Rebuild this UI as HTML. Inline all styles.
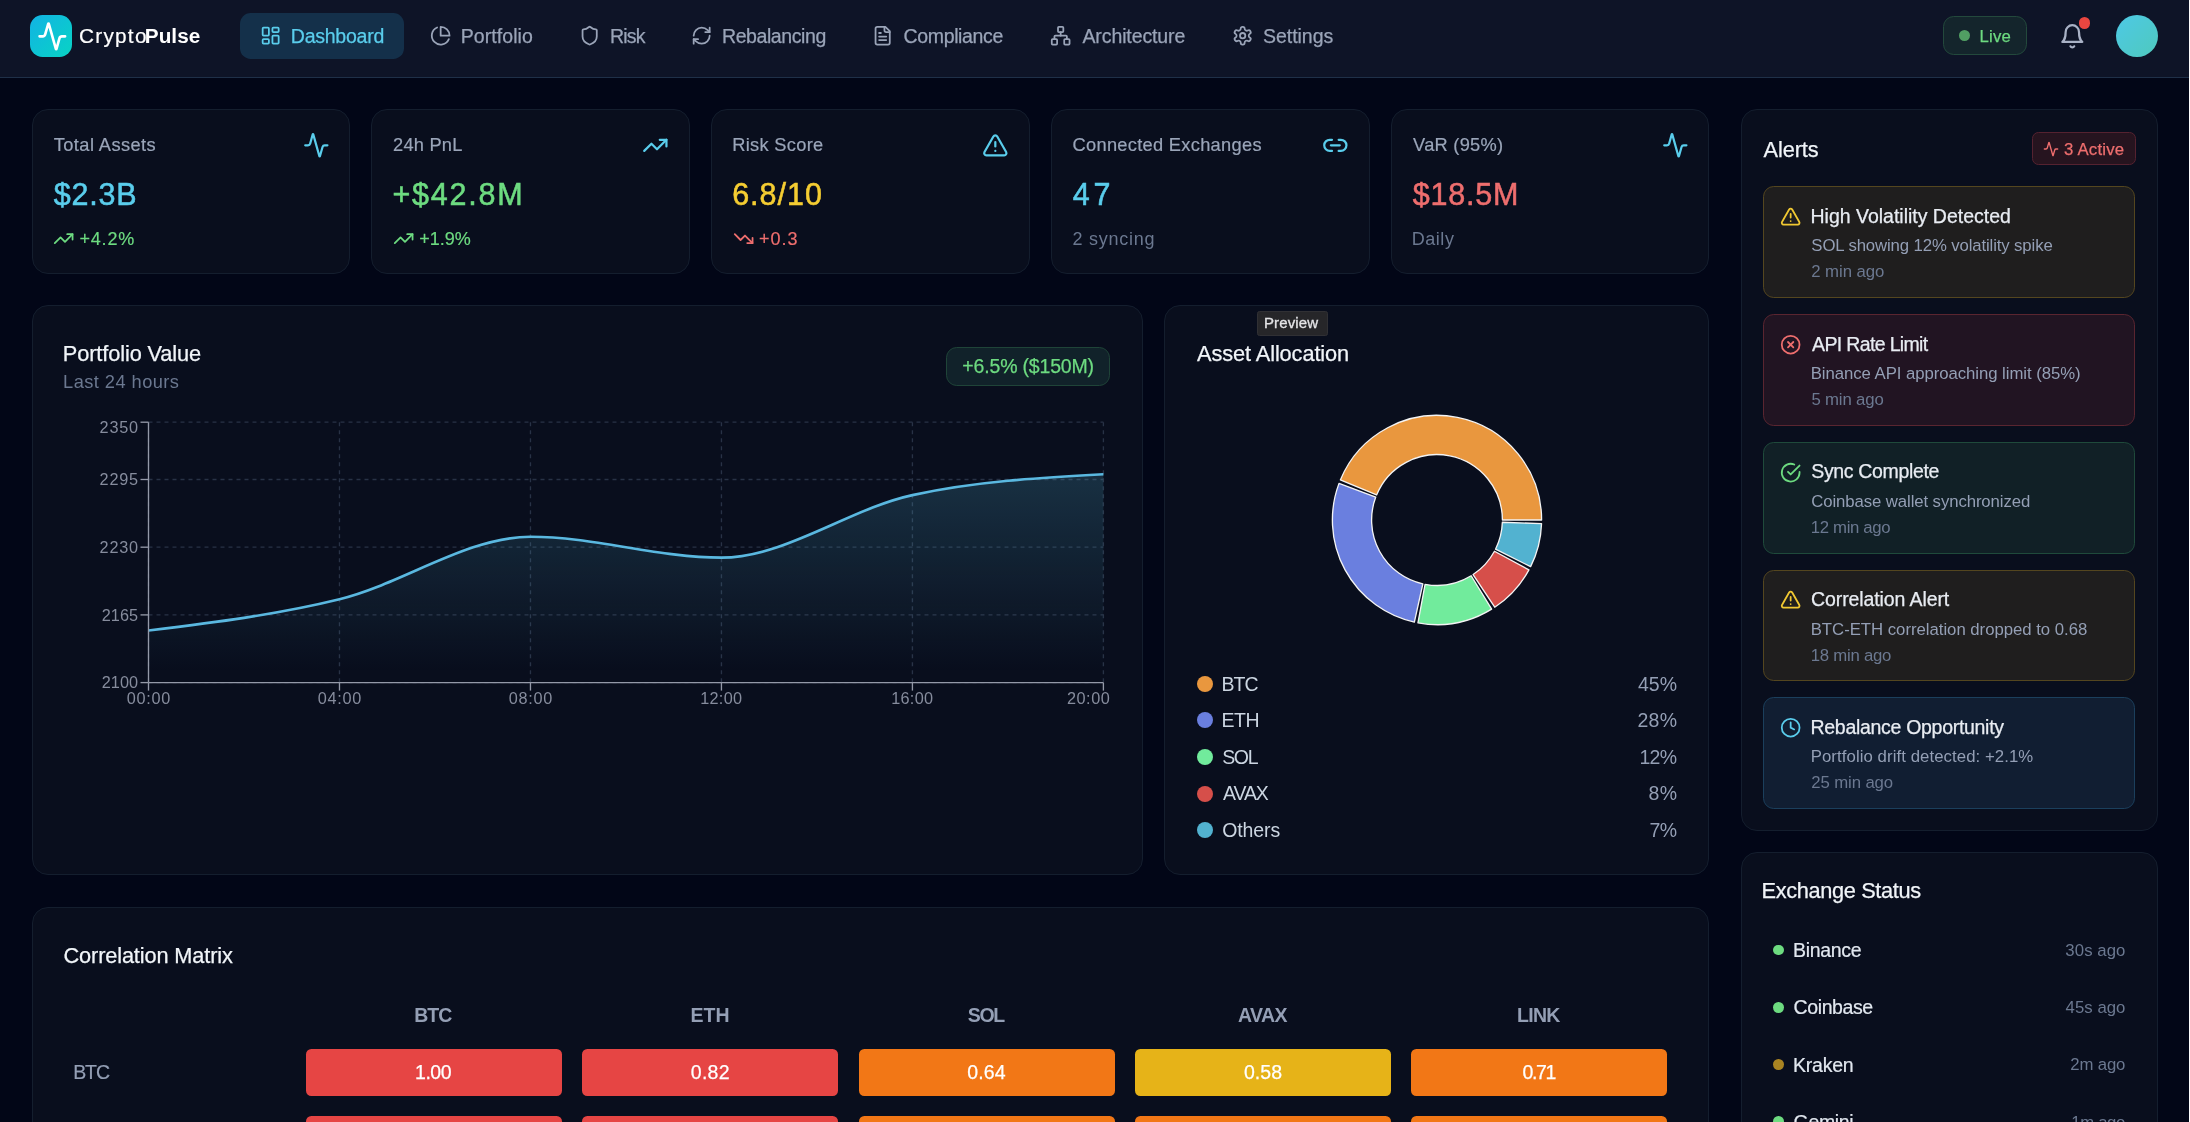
<!DOCTYPE html>
<html><head><meta charset="utf-8"><title>CryptoPulse</title>
<style>
html,body{margin:0;padding:0;background:#020617;}
body{width:2190px;height:1122px;overflow:hidden;position:relative;font-family:"Liberation Sans",sans-serif;}
.t{position:absolute;white-space:nowrap;line-height:1;}
.b{position:absolute;box-sizing:border-box;}
.i{position:absolute;overflow:visible;}
svg.c{position:absolute;overflow:visible;}
#w{position:absolute;left:0;top:0;width:2190px;height:1122px;will-change:transform;}
</style></head><body><div id="w">
<div class="b" style="left:0.00px;top:0.00px;width:2190.00px;height:77.30px;background:#0e1427;"></div>
<div class="b" style="left:0.00px;top:77.00px;width:2190.00px;height:1.40px;background:#1f3048;"></div>
<div class="b" style="left:30.00px;top:15.00px;width:42.00px;height:42.00px;background:linear-gradient(135deg,#12b3e4 0%,#08d4c4 100%);border-radius:12.5px;"></div>
<svg class="i" style="left:36.50px;top:21.10px" width="30.70" height="30.70" viewBox="0 0 24 24" fill="none" stroke="#ffffff" stroke-width="2.05" stroke-linecap="round" stroke-linejoin="round"><path d="M22 12h-2.48a2 2 0 0 0-1.93 1.46l-2.35 8.36a.25.25 0 0 1-.48 0L9.24 2.18a.25.25 0 0 0-.48 0l-2.35 8.36A2 2 0 0 1 4.49 12H2"/></svg>
<div class="t" style="left:78.95px;top:26.00px;font-size:20.75px;color:#ffffff;letter-spacing:1.280px;-webkit-text-stroke:0.2px #ffffff;">Crypto</div>
<div class="t" style="left:144.81px;top:26.00px;font-size:20.75px;color:#ffffff;letter-spacing:0.031px;font-weight:700;">Pulse</div>
<div class="b" style="left:240.00px;top:12.60px;width:164.40px;height:46.40px;background:#14304a;border-radius:10.7px;"></div>
<svg class="i" style="left:260.20px;top:25.30px" width="21.33" height="21.33" viewBox="0 0 24 24" fill="none" stroke="#5acdec" stroke-width="2" stroke-linecap="round" stroke-linejoin="round"><rect width="7" height="9" x="3" y="3" rx="1"/><rect width="7" height="5" x="14" y="3" rx="1"/><rect width="7" height="9" x="14" y="12" rx="1"/><rect width="7" height="5" x="3" y="16" rx="1"/></svg>
<div class="t" style="left:290.80px;top:27.00px;font-size:19.50px;color:#5acdec;letter-spacing:-0.244px;-webkit-text-stroke:0.25px #5acdec;">Dashboard</div>
<svg class="i" style="left:429.80px;top:25.30px" width="21.33" height="21.33" viewBox="0 0 24 24" fill="none" stroke="#9aa4b8" stroke-width="2" stroke-linecap="round" stroke-linejoin="round"><path d="M21.21 15.89A10 10 0 1 1 8 2.83"/><path d="M22 12A10 10 0 0 0 12 2v10z"/></svg>
<div class="t" style="left:460.80px;top:27.00px;font-size:19.50px;color:#9aa4b8;letter-spacing:0.059px;-webkit-text-stroke:0.25px #9aa4b8;">Portfolio</div>
<svg class="i" style="left:579.20px;top:25.30px" width="21.33" height="21.33" viewBox="0 0 24 24" fill="none" stroke="#9aa4b8" stroke-width="2" stroke-linecap="round" stroke-linejoin="round"><path d="M20 13c0 5-3.5 7.5-7.66 8.95a1 1 0 0 1-.67-.01C7.5 20.5 4 18 4 13V6a1 1 0 0 1 1-1c2 0 4.5-1.2 6.24-2.72a1.17 1.17 0 0 1 1.52 0C14.51 3.81 17 5 19 5a1 1 0 0 1 1 1z"/></svg>
<div class="t" style="left:610.00px;top:27.00px;font-size:19.50px;color:#9aa4b8;letter-spacing:-0.784px;-webkit-text-stroke:0.25px #9aa4b8;">Risk</div>
<svg class="i" style="left:690.70px;top:25.30px" width="21.33" height="21.33" viewBox="0 0 24 24" fill="none" stroke="#9aa4b8" stroke-width="2" stroke-linecap="round" stroke-linejoin="round"><path d="M3 12a9 9 0 0 1 9-9 9.75 9.75 0 0 1 6.74 2.74L21 8"/><path d="M21 3v5h-5"/><path d="M21 12a9 9 0 0 1-9 9 9.75 9.75 0 0 1-6.74-2.74L3 16"/><path d="M8 16H3v5"/></svg>
<div class="t" style="left:722.00px;top:27.00px;font-size:19.50px;color:#9aa4b8;letter-spacing:-0.417px;-webkit-text-stroke:0.25px #9aa4b8;">Rebalancing</div>
<svg class="i" style="left:871.80px;top:25.30px" width="21.33" height="21.33" viewBox="0 0 24 24" fill="none" stroke="#9aa4b8" stroke-width="2" stroke-linecap="round" stroke-linejoin="round"><path d="M15 2H6a2 2 0 0 0-2 2v16a2 2 0 0 0 2 2h12a2 2 0 0 0 2-2V7Z"/><path d="M14 2v4a2 2 0 0 0 2 2h4"/><path d="M10 9H8"/><path d="M16 13H8"/><path d="M16 17H8"/></svg>
<div class="t" style="left:903.51px;top:27.00px;font-size:19.50px;color:#9aa4b8;letter-spacing:-0.346px;-webkit-text-stroke:0.25px #9aa4b8;">Compliance</div>
<svg class="i" style="left:1049.80px;top:25.30px" width="21.33" height="21.33" viewBox="0 0 24 24" fill="none" stroke="#9aa4b8" stroke-width="2" stroke-linecap="round" stroke-linejoin="round"><rect x="16" y="16" width="6" height="6" rx="1"/><rect x="2" y="16" width="6" height="6" rx="1"/><rect x="9" y="2" width="6" height="6" rx="1"/><path d="M5 16v-3a1 1 0 0 1 1-1h12a1 1 0 0 1 1 1v3"/><path d="M12 12V8"/></svg>
<div class="t" style="left:1082.46px;top:27.00px;font-size:19.50px;color:#9aa4b8;letter-spacing:-0.104px;-webkit-text-stroke:0.25px #9aa4b8;">Architecture</div>
<svg class="i" style="left:1231.80px;top:25.30px" width="21.33" height="21.33" viewBox="0 0 24 24" fill="none" stroke="#9aa4b8" stroke-width="2" stroke-linecap="round" stroke-linejoin="round"><path d="M12.22 2h-.44a2 2 0 0 0-2 2v.18a2 2 0 0 1-1 1.73l-.43.25a2 2 0 0 1-2 0l-.15-.08a2 2 0 0 0-2.73.73l-.22.38a2 2 0 0 0 .73 2.73l.15.1a2 2 0 0 1 1 1.72v.51a2 2 0 0 1-1 1.74l-.15.09a2 2 0 0 0-.73 2.73l.22.38a2 2 0 0 0 2.73.73l.15-.08a2 2 0 0 1 2 0l.43.25a2 2 0 0 1 1 1.73V20a2 2 0 0 0 2 2h.44a2 2 0 0 0 2-2v-.18a2 2 0 0 1 1-1.73l.43-.25a2 2 0 0 1 2 0l.15.08a2 2 0 0 0 2.73-.73l.22-.39a2 2 0 0 0-.73-2.73l-.15-.08a2 2 0 0 1-1-1.74v-.5a2 2 0 0 1 1-1.74l.15-.09a2 2 0 0 0 .73-2.73l-.22-.38a2 2 0 0 0-2.73-.73l-.15.08a2 2 0 0 1-2 0l-.43-.25a2 2 0 0 1-1-1.73V4a2 2 0 0 0-2-2z"/><circle cx="12" cy="12" r="3"/></svg>
<div class="t" style="left:1263.11px;top:27.00px;font-size:19.50px;color:#9aa4b8;letter-spacing:-0.054px;-webkit-text-stroke:0.25px #9aa4b8;">Settings</div>
<div class="b" style="left:1942.60px;top:15.90px;width:84.80px;height:39.60px;background:#14252c;border:1.33px solid #23493c;border-radius:10.7px;"></div>
<div class="b" style="left:1959.20px;top:30.30px;width:11.00px;height:11.00px;background:#519f63;border-radius:5.5px;"></div>
<div class="t" style="left:1979.43px;top:29.00px;font-size:16.75px;color:#6ddb80;letter-spacing:0.261px;-webkit-text-stroke:0.25px #6ddb80;">Live</div>
<svg class="i" style="left:2058.60px;top:22.50px" width="26.67" height="26.67" viewBox="0 0 24 24" fill="none" stroke="#a9b2c6" stroke-width="2" stroke-linecap="round" stroke-linejoin="round"><path d="M6 8a6 6 0 0 1 12 0c0 7 3 9 3 9H3s3-2 3-9"/><path d="M10.3 21a1.94 1.94 0 0 0 3.4 0"/></svg>
<div class="b" style="left:2079.00px;top:17.30px;width:11.30px;height:11.30px;background:#ea4640;border-radius:5.7px;"></div>
<div class="b" style="left:2116.00px;top:14.80px;width:42.00px;height:42.00px;background:linear-gradient(135deg,#4dc9e6 0%,#4fc9bd 100%);border-radius:21px;"></div>
<div class="b" style="left:31.70px;top:109.30px;width:318.60px;height:164.40px;background:#090e1d;border:1.33px solid #141e2e;border-radius:16px;"></div>
<div class="t" style="left:53.79px;top:136.00px;font-size:18.25px;color:#9aa5b9;letter-spacing:0.407px;-webkit-text-stroke:0.2px #9aa5b9;">Total Assets</div>
<svg class="i" style="left:302.50px;top:131.50px" width="26.67" height="26.67" viewBox="0 0 24 24" fill="none" stroke="#5acdec" stroke-width="2" stroke-linecap="round" stroke-linejoin="round"><path d="M22 12h-2.48a2 2 0 0 0-1.93 1.46l-2.35 8.36a.25.25 0 0 1-.48 0L9.24 2.18a.25.25 0 0 0-.48 0l-2.35 8.36A2 2 0 0 1 4.49 12H2"/></svg>
<div class="t" style="left:53.87px;top:179.00px;font-size:30.50px;color:#5acdec;letter-spacing:0.754px;-webkit-text-stroke:0.55px #5acdec;">$2.3B</div>
<svg class="i" style="left:53.30px;top:227.60px" width="21.33" height="21.33" viewBox="0 0 24 24" fill="none" stroke="#6ddb80" stroke-width="2" stroke-linecap="round" stroke-linejoin="round"><polyline points="22 7 13.5 15.5 8.5 10.5 2 17"/><polyline points="16 7 22 7 22 13"/></svg>
<div class="t" style="left:79.42px;top:230.00px;font-size:18.00px;color:#6ddb80;letter-spacing:0.843px;-webkit-text-stroke:0.2px #6ddb80;">+4.2%</div>
<div class="b" style="left:371.45px;top:109.30px;width:318.60px;height:164.40px;background:#090e1d;border:1.33px solid #141e2e;border-radius:16px;"></div>
<div class="t" style="left:393.03px;top:136.00px;font-size:18.25px;color:#9aa5b9;letter-spacing:0.221px;-webkit-text-stroke:0.2px #9aa5b9;">24h PnL</div>
<svg class="i" style="left:642.25px;top:131.50px" width="26.67" height="26.67" viewBox="0 0 24 24" fill="none" stroke="#5acdec" stroke-width="2" stroke-linecap="round" stroke-linejoin="round"><polyline points="22 7 13.5 15.5 8.5 10.5 2 17"/><polyline points="16 7 22 7 22 13"/></svg>
<div class="t" style="left:392.46px;top:179.00px;font-size:30.50px;color:#6ddb80;letter-spacing:1.757px;-webkit-text-stroke:0.55px #6ddb80;">+$42.8M</div>
<svg class="i" style="left:393.05px;top:227.60px" width="21.33" height="21.33" viewBox="0 0 24 24" fill="none" stroke="#6ddb80" stroke-width="2" stroke-linecap="round" stroke-linejoin="round"><polyline points="22 7 13.5 15.5 8.5 10.5 2 17"/><polyline points="16 7 22 7 22 13"/></svg>
<div class="t" style="left:419.17px;top:230.00px;font-size:18.00px;color:#6ddb80;letter-spacing:-0.007px;-webkit-text-stroke:0.2px #6ddb80;">+1.9%</div>
<div class="b" style="left:711.20px;top:109.30px;width:318.60px;height:164.40px;background:#090e1d;border:1.33px solid #141e2e;border-radius:16px;"></div>
<div class="t" style="left:732.20px;top:136.00px;font-size:18.25px;color:#9aa5b9;letter-spacing:0.308px;-webkit-text-stroke:0.2px #9aa5b9;">Risk Score</div>
<svg class="i" style="left:982.00px;top:131.50px" width="26.67" height="26.67" viewBox="0 0 24 24" fill="none" stroke="#5acdec" stroke-width="2" stroke-linecap="round" stroke-linejoin="round"><path d="m21.73 18-8-14a2 2 0 0 0-3.48 0l-8 14A2 2 0 0 0 4 21h16a2 2 0 0 0 1.73-3"/><path d="M12 9v4"/><path d="M12 17h.01"/></svg>
<div class="t" style="left:732.15px;top:179.00px;font-size:30.50px;color:#f5cd32;letter-spacing:1.006px;-webkit-text-stroke:0.55px #f5cd32;">6.8/10</div>
<svg class="i" style="left:732.80px;top:227.60px" width="21.33" height="21.33" viewBox="0 0 24 24" fill="none" stroke="#ee6e6e" stroke-width="2" stroke-linecap="round" stroke-linejoin="round"><polyline points="22 17 13.5 8.5 8.5 13.5 2 7"/><polyline points="16 17 22 17 22 11"/></svg>
<div class="t" style="left:758.92px;top:230.00px;font-size:18.00px;color:#ee6e6e;letter-spacing:1.008px;-webkit-text-stroke:0.2px #ee6e6e;">+0.3</div>
<div class="b" style="left:1050.95px;top:109.30px;width:318.60px;height:164.40px;background:#090e1d;border:1.33px solid #141e2e;border-radius:16px;"></div>
<div class="t" style="left:1072.52px;top:136.00px;font-size:18.25px;color:#9aa5b9;letter-spacing:0.297px;-webkit-text-stroke:0.2px #9aa5b9;">Connected Exchanges</div>
<svg class="i" style="left:1321.75px;top:131.50px" width="26.67" height="26.67" viewBox="0 0 24 24" fill="none" stroke="#5acdec" stroke-width="2" stroke-linecap="round" stroke-linejoin="round"><path d="M9 17H7A5 5 0 0 1 7 7h2"/><path d="M15 7h2a5 5 0 1 1 0 10h-2"/><line x1="8" x2="16" y1="12" y2="12"/></svg>
<div class="t" style="left:1072.75px;top:179.00px;font-size:30.50px;color:#5acdec;letter-spacing:3.896px;-webkit-text-stroke:0.55px #5acdec;">47</div>
<div class="t" style="left:1072.54px;top:230.00px;font-size:18.00px;color:#6b7890;letter-spacing:0.740px;">2 syncing</div>
<div class="b" style="left:1390.70px;top:109.30px;width:318.60px;height:164.40px;background:#090e1d;border:1.33px solid #141e2e;border-radius:16px;"></div>
<div class="t" style="left:1413.12px;top:136.00px;font-size:18.25px;color:#9aa5b9;letter-spacing:0.251px;-webkit-text-stroke:0.2px #9aa5b9;">VaR (95%)</div>
<svg class="i" style="left:1661.50px;top:131.50px" width="26.67" height="26.67" viewBox="0 0 24 24" fill="none" stroke="#5acdec" stroke-width="2" stroke-linecap="round" stroke-linejoin="round"><path d="M22 12h-2.48a2 2 0 0 0-1.93 1.46l-2.35 8.36a.25.25 0 0 1-.48 0L9.24 2.18a.25.25 0 0 0-.48 0l-2.35 8.36A2 2 0 0 1 4.49 12H2"/></svg>
<div class="t" style="left:1412.87px;top:179.00px;font-size:30.50px;color:#ee6e6e;letter-spacing:0.779px;-webkit-text-stroke:0.55px #ee6e6e;">$18.5M</div>
<div class="t" style="left:1411.72px;top:230.00px;font-size:18.00px;color:#6b7890;letter-spacing:0.549px;">Daily</div>
<div class="b" style="left:31.70px;top:305.00px;width:1111.30px;height:569.60px;background:#090e1d;border:1.33px solid #141e2e;border-radius:16px;"></div>
<div class="t" style="left:62.82px;top:343.00px;font-size:21.75px;color:#f1f5f9;letter-spacing:-0.108px;-webkit-text-stroke:0.25px #f1f5f9;">Portfolio Value</div>
<div class="t" style="left:63.10px;top:373.00px;font-size:18.25px;color:#6b7890;letter-spacing:0.439px;">Last 24 hours</div>
<div class="b" style="left:946.00px;top:346.80px;width:164.40px;height:39.00px;background:#11222a;border:1.33px solid #1f4438;border-radius:10.7px;"></div>
<div class="t" style="left:962.35px;top:357.00px;font-size:19.50px;color:#6ddb80;letter-spacing:-0.176px;-webkit-text-stroke:0.25px #6ddb80;">+6.5% ($150M)</div>
<svg class="c" style="left:0;top:0" width="2190" height="1122" viewBox="0 0 2190 1122"><defs><linearGradient id="ag" x1="0" y1="0" x2="0" y2="1"><stop offset="5%" stop-color="#52b2d0" stop-opacity="0.2"/><stop offset="95%" stop-color="#52b2d0" stop-opacity="0"/></linearGradient></defs><line x1="148.5" y1="682.60" x2="1103.4" y2="682.60" stroke="#283246" stroke-width="1.33" stroke-dasharray="4 4"/><line x1="148.5" y1="614.90" x2="1103.4" y2="614.90" stroke="#283246" stroke-width="1.33" stroke-dasharray="4 4"/><line x1="148.5" y1="547.19" x2="1103.4" y2="547.19" stroke="#283246" stroke-width="1.33" stroke-dasharray="4 4"/><line x1="148.5" y1="479.49" x2="1103.4" y2="479.49" stroke="#283246" stroke-width="1.33" stroke-dasharray="4 4"/><line x1="148.5" y1="422.20" x2="1103.4" y2="422.20" stroke="#283246" stroke-width="1.33" stroke-dasharray="4 4"/><line x1="148.50" y1="422.2" x2="148.50" y2="682.6" stroke="#283246" stroke-width="1.33" stroke-dasharray="4 4"/><line x1="339.48" y1="422.2" x2="339.48" y2="682.6" stroke="#283246" stroke-width="1.33" stroke-dasharray="4 4"/><line x1="530.46" y1="422.2" x2="530.46" y2="682.6" stroke="#283246" stroke-width="1.33" stroke-dasharray="4 4"/><line x1="721.44" y1="422.2" x2="721.44" y2="682.6" stroke="#283246" stroke-width="1.33" stroke-dasharray="4 4"/><line x1="912.42" y1="422.2" x2="912.42" y2="682.6" stroke="#283246" stroke-width="1.33" stroke-dasharray="4 4"/><line x1="1103.40" y1="422.2" x2="1103.40" y2="682.6" stroke="#283246" stroke-width="1.33" stroke-dasharray="4 4"/><path d="M148.50,630.52C212.16,622.71,275.82,614.90,339.48,599.27C403.14,583.65,466.80,536.78,530.46,536.78C594.12,536.78,657.78,557.61,721.44,557.61C785.10,557.61,848.76,509.00,912.42,495.11C976.08,481.22,1039.74,477.75,1103.40,474.28L1103.4,682.6L148.5,682.6Z" fill="url(#ag)"/><path d="M148.50,630.52C212.16,622.71,275.82,614.90,339.48,599.27C403.14,583.65,466.80,536.78,530.46,536.78C594.12,536.78,657.78,557.61,721.44,557.61C785.10,557.61,848.76,509.00,912.42,495.11C976.08,481.22,1039.74,477.75,1103.40,474.28" fill="none" stroke="#5ab8e0" stroke-width="2.67"/><line x1="148.5" y1="422.2" x2="148.5" y2="682.6" stroke="#9499a8" stroke-width="1.33"/><line x1="148.5" y1="682.6" x2="1103.4" y2="682.6" stroke="#9499a8" stroke-width="1.33"/><line x1="140.5" y1="682.60" x2="148.5" y2="682.60" stroke="#9499a8" stroke-width="1.33"/><line x1="140.5" y1="614.90" x2="148.5" y2="614.90" stroke="#9499a8" stroke-width="1.33"/><line x1="140.5" y1="547.19" x2="148.5" y2="547.19" stroke="#9499a8" stroke-width="1.33"/><line x1="140.5" y1="479.49" x2="148.5" y2="479.49" stroke="#9499a8" stroke-width="1.33"/><line x1="140.5" y1="422.20" x2="148.5" y2="422.20" stroke="#9499a8" stroke-width="1.33"/><line x1="148.50" y1="682.6" x2="148.50" y2="690.6" stroke="#9499a8" stroke-width="1.33"/><line x1="339.48" y1="682.6" x2="339.48" y2="690.6" stroke="#9499a8" stroke-width="1.33"/><line x1="530.46" y1="682.6" x2="530.46" y2="690.6" stroke="#9499a8" stroke-width="1.33"/><line x1="721.44" y1="682.6" x2="721.44" y2="690.6" stroke="#9499a8" stroke-width="1.33"/><line x1="912.42" y1="682.6" x2="912.42" y2="690.6" stroke="#9499a8" stroke-width="1.33"/><line x1="1103.40" y1="682.6" x2="1103.40" y2="690.6" stroke="#9499a8" stroke-width="1.33"/></svg>
<div class="t" style="left:101.78px;top:674.00px;font-size:16.25px;color:#868c9d;letter-spacing:0.032px;">2100</div>
<div class="t" style="left:101.78px;top:607.00px;font-size:16.25px;color:#868c9d;letter-spacing:0.048px;">2165</div>
<div class="t" style="left:99.58px;top:539.00px;font-size:16.25px;color:#868c9d;letter-spacing:0.765px;">2230</div>
<div class="t" style="left:99.58px;top:471.00px;font-size:16.25px;color:#868c9d;letter-spacing:0.781px;">2295</div>
<div class="t" style="left:99.58px;top:419.00px;font-size:16.25px;color:#868c9d;letter-spacing:0.765px;">2350</div>
<div class="t" style="left:126.67px;top:690.00px;font-size:16.25px;color:#868c9d;letter-spacing:0.749px;">00:00</div>
<div class="t" style="left:317.65px;top:690.00px;font-size:16.25px;color:#868c9d;letter-spacing:0.749px;">04:00</div>
<div class="t" style="left:508.63px;top:690.00px;font-size:16.25px;color:#868c9d;letter-spacing:0.749px;">08:00</div>
<div class="t" style="left:700.15px;top:690.00px;font-size:16.25px;color:#868c9d;letter-spacing:0.325px;">12:00</div>
<div class="t" style="left:891.13px;top:690.00px;font-size:16.25px;color:#868c9d;letter-spacing:0.325px;">16:00</div>
<div class="t" style="left:1066.88px;top:690.00px;font-size:16.25px;color:#868c9d;letter-spacing:0.570px;">20:00</div>
<div class="b" style="left:1164.20px;top:305.00px;width:544.60px;height:569.60px;background:#090e1d;border:1.33px solid #141e2e;border-radius:16px;"></div>
<div class="t" style="left:1197.06px;top:343.00px;font-size:21.75px;color:#f1f5f9;letter-spacing:-0.093px;-webkit-text-stroke:0.25px #f1f5f9;">Asset Allocation</div>
<div class="b" style="left:1257.00px;top:311.30px;width:70.80px;height:24.50px;background:#262629;border:1.33px solid #303034;border-radius:2.5px;"></div>
<div class="t" style="left:1263.97px;top:315.00px;font-size:15.00px;color:#e4e4e7;letter-spacing:0.139px;-webkit-text-stroke:0.3px #e4e4e7;">Preview</div>
<svg class="c" style="left:0;top:0" width="2190" height="1122" viewBox="0 0 2190 1122"><path d="M1541.60,520.00A104.6,104.6,0,0,0,1340.36,479.97L1376.58,494.97A65.4,65.4,0,0,1,1502.40,520.00Z" fill="#e9973e" stroke="#f4f4f4" stroke-width="1.33" stroke-linejoin="round"/><path d="M1339.02,483.37A104.6,104.6,0,0,0,1414.36,622.12L1422.84,583.85A65.4,65.4,0,0,1,1375.74,497.10Z" fill="#6a7fdf" stroke="#f4f4f4" stroke-width="1.33" stroke-linejoin="round"/><path d="M1417.94,622.85A104.6,104.6,0,0,0,1491.65,609.19L1471.17,575.76A65.4,65.4,0,0,1,1425.08,584.30Z" fill="#71eb9c" stroke="#f4f4f4" stroke-width="1.33" stroke-linejoin="round"/><path d="M1494.73,607.22A104.6,104.6,0,0,0,1528.92,569.91L1494.47,551.21A65.4,65.4,0,0,1,1473.10,574.54Z" fill="#d64f4a" stroke="#f4f4f4" stroke-width="1.33" stroke-linejoin="round"/><path d="M1530.61,566.67A104.6,104.6,0,0,0,1541.54,523.65L1502.36,522.28A65.4,65.4,0,0,1,1495.53,549.18Z" fill="#52b2d0" stroke="#f4f4f4" stroke-width="1.33" stroke-linejoin="round"/></svg>
<div class="b" style="left:1196.80px;top:675.90px;width:16.00px;height:16.00px;background:#e9973e;border-radius:8px;"></div>
<div class="t" style="left:1221.50px;top:675.00px;font-size:19.50px;color:#cbd5e1;letter-spacing:-0.929px;">BTC</div>
<div class="t" style="left:1637.95px;top:675.00px;font-size:19.50px;color:#949fb5;letter-spacing:0.056px;">45%</div>
<div class="b" style="left:1196.80px;top:712.45px;width:16.00px;height:16.00px;background:#6a7fdf;border-radius:8px;"></div>
<div class="t" style="left:1221.50px;top:711.00px;font-size:19.50px;color:#cbd5e1;letter-spacing:-0.505px;">ETH</div>
<div class="t" style="left:1637.42px;top:711.00px;font-size:19.50px;color:#949fb5;letter-spacing:0.322px;">28%</div>
<div class="b" style="left:1196.80px;top:749.00px;width:16.00px;height:16.00px;background:#71eb9c;border-radius:8px;"></div>
<div class="t" style="left:1222.21px;top:748.00px;font-size:19.50px;color:#cbd5e1;letter-spacing:-1.349px;">SOL</div>
<div class="t" style="left:1639.41px;top:748.00px;font-size:19.50px;color:#949fb5;letter-spacing:-0.675px;">12%</div>
<div class="b" style="left:1196.80px;top:785.55px;width:16.00px;height:16.00px;background:#d64f4a;border-radius:8px;"></div>
<div class="t" style="left:1223.06px;top:784.00px;font-size:19.50px;color:#cbd5e1;letter-spacing:-1.131px;">AVAX</div>
<div class="t" style="left:1648.55px;top:784.00px;font-size:19.50px;color:#949fb5;letter-spacing:0.355px;">8%</div>
<div class="b" style="left:1196.80px;top:822.10px;width:16.00px;height:16.00px;background:#52b2d0;border-radius:8px;"></div>
<div class="t" style="left:1222.18px;top:821.00px;font-size:19.50px;color:#cbd5e1;letter-spacing:-0.101px;">Others</div>
<div class="t" style="left:1649.40px;top:821.00px;font-size:19.50px;color:#949fb5;letter-spacing:-0.493px;">7%</div>
<div class="b" style="left:1741.00px;top:109.30px;width:416.60px;height:721.40px;background:#090e1d;border:1.33px solid #141e2e;border-radius:16px;"></div>
<div class="t" style="left:1763.56px;top:139.00px;font-size:21.75px;color:#f1f5f9;letter-spacing:-0.116px;-webkit-text-stroke:0.25px #f1f5f9;">Alerts</div>
<div class="b" style="left:2031.50px;top:132.00px;width:104.00px;height:33.20px;background:#26141f;border:1.33px solid #552230;border-radius:6.5px;"></div>
<svg class="i" style="left:2042.60px;top:140.60px" width="16.00" height="16.00" viewBox="0 0 24 24" fill="none" stroke="#ee6e6e" stroke-width="2" stroke-linecap="round" stroke-linejoin="round"><path d="M22 12h-2.48a2 2 0 0 0-1.93 1.46l-2.35 8.36a.25.25 0 0 1-.48 0L9.24 2.18a.25.25 0 0 0-.48 0l-2.35 8.36A2 2 0 0 1 4.49 12H2"/></svg>
<div class="t" style="left:2064.06px;top:142.00px;font-size:16.75px;color:#ee6e6e;letter-spacing:0.187px;-webkit-text-stroke:0.25px #ee6e6e;">3 Active</div>
<div class="b" style="left:1763.20px;top:186.20px;width:372.20px;height:111.80px;background:#1f1e1e;border:1.33px solid #54461f;border-radius:10.7px;"></div>
<svg class="i" style="left:1779.80px;top:206.00px" width="21.33" height="21.33" viewBox="0 0 24 24" fill="none" stroke="#f0c832" stroke-width="2" stroke-linecap="round" stroke-linejoin="round"><path d="m21.73 18-8-14a2 2 0 0 0-3.48 0l-8 14A2 2 0 0 0 4 21h16a2 2 0 0 0 1.73-3"/><path d="M12 9v4"/><path d="M12 17h.01"/></svg>
<div class="t" style="left:1810.50px;top:207.00px;font-size:19.50px;color:#e8ecf2;letter-spacing:-0.008px;-webkit-text-stroke:0.25px #e8ecf2;">High Volatility Detected</div>
<div class="t" style="left:1811.34px;top:238.00px;font-size:16.75px;color:#949fb5;letter-spacing:-0.122px;">SOL showing 12% volatility spike</div>
<div class="t" style="left:1811.26px;top:264.00px;font-size:16.75px;color:#6b7890;letter-spacing:-0.065px;">2 min ago</div>
<div class="b" style="left:1763.20px;top:314.00px;width:372.20px;height:111.80px;background:#211422;border:1.33px solid #5a2530;border-radius:10.7px;"></div>
<svg class="i" style="left:1779.80px;top:333.80px" width="21.33" height="21.33" viewBox="0 0 24 24" fill="none" stroke="#ee6e6e" stroke-width="2" stroke-linecap="round" stroke-linejoin="round"><circle cx="12" cy="12" r="10"/><path d="m15 9-6 6"/><path d="m9 9 6 6"/></svg>
<div class="t" style="left:1812.06px;top:335.00px;font-size:19.50px;color:#e8ecf2;letter-spacing:-0.651px;-webkit-text-stroke:0.25px #e8ecf2;">API Rate Limit</div>
<div class="t" style="left:1810.73px;top:366.00px;font-size:16.75px;color:#949fb5;letter-spacing:-0.058px;">Binance API approaching limit (85%)</div>
<div class="t" style="left:1811.43px;top:392.00px;font-size:16.75px;color:#6b7890;letter-spacing:-0.161px;">5 min ago</div>
<div class="b" style="left:1763.20px;top:441.80px;width:372.20px;height:111.80px;background:#112026;border:1.33px solid #1f4a3b;border-radius:10.7px;"></div>
<svg class="i" style="left:1779.80px;top:461.60px" width="21.33" height="21.33" viewBox="0 0 24 24" fill="none" stroke="#6ddb80" stroke-width="2" stroke-linecap="round" stroke-linejoin="round"><path d="M22 11.08V12a10 10 0 1 1-5.93-9.14"/><path d="m9 11 3 3L22 4"/></svg>
<div class="t" style="left:1811.21px;top:462.00px;font-size:19.50px;color:#e8ecf2;letter-spacing:-0.332px;-webkit-text-stroke:0.25px #e8ecf2;">Sync Complete</div>
<div class="t" style="left:1811.25px;top:494.00px;font-size:16.75px;color:#949fb5;letter-spacing:-0.096px;">Coinbase wallet synchronized</div>
<div class="t" style="left:1810.82px;top:520.00px;font-size:16.75px;color:#6b7890;letter-spacing:-0.344px;">12 min ago</div>
<div class="b" style="left:1763.20px;top:569.60px;width:372.20px;height:111.80px;background:#1f1e1e;border:1.33px solid #54461f;border-radius:10.7px;"></div>
<svg class="i" style="left:1779.80px;top:589.40px" width="21.33" height="21.33" viewBox="0 0 24 24" fill="none" stroke="#f0c832" stroke-width="2" stroke-linecap="round" stroke-linejoin="round"><path d="m21.73 18-8-14a2 2 0 0 0-3.48 0l-8 14A2 2 0 0 0 4 21h16a2 2 0 0 0 1.73-3"/><path d="M12 9v4"/><path d="M12 17h.01"/></svg>
<div class="t" style="left:1811.11px;top:590.00px;font-size:19.50px;color:#e8ecf2;letter-spacing:-0.106px;-webkit-text-stroke:0.25px #e8ecf2;">Correlation Alert</div>
<div class="t" style="left:1810.73px;top:622.00px;font-size:16.75px;color:#949fb5;letter-spacing:-0.025px;">BTC-ETH correlation dropped to 0.68</div>
<div class="t" style="left:1810.82px;top:648.00px;font-size:16.75px;color:#6b7890;letter-spacing:-0.255px;">18 min ago</div>
<div class="b" style="left:1763.20px;top:697.40px;width:372.20px;height:111.80px;background:#111e32;border:1.33px solid #1b3f5c;border-radius:10.7px;"></div>
<svg class="i" style="left:1779.80px;top:717.20px" width="21.33" height="21.33" viewBox="0 0 24 24" fill="none" stroke="#5acdec" stroke-width="2" stroke-linecap="round" stroke-linejoin="round"><circle cx="12" cy="12" r="10"/><polyline points="12 6 12 12 16 14"/></svg>
<div class="t" style="left:1810.50px;top:718.00px;font-size:19.50px;color:#e8ecf2;letter-spacing:-0.297px;-webkit-text-stroke:0.25px #e8ecf2;">Rebalance Opportunity</div>
<div class="t" style="left:1810.73px;top:749.00px;font-size:16.75px;color:#949fb5;letter-spacing:0.078px;">Portfolio drift detected: +2.1%</div>
<div class="t" style="left:1811.26px;top:775.00px;font-size:16.75px;color:#6b7890;letter-spacing:-0.114px;">25 min ago</div>
<div class="b" style="left:1741.00px;top:852.00px;width:416.60px;height:330.00px;background:#090e1d;border:1.33px solid #141e2e;border-radius:16px;"></div>
<div class="t" style="left:1761.62px;top:880.00px;font-size:21.75px;color:#f1f5f9;letter-spacing:-0.356px;-webkit-text-stroke:0.25px #f1f5f9;">Exchange Status</div>
<div class="b" style="left:1773.20px;top:944.50px;width:10.80px;height:10.80px;background:#6ddb80;border-radius:5.4px;"></div>
<div class="t" style="left:1793.00px;top:941.00px;font-size:19.50px;color:#e2e8f0;letter-spacing:-0.317px;-webkit-text-stroke:0.2px #e2e8f0;">Binance</div>
<div class="t" style="left:2065.36px;top:943.00px;font-size:16.75px;color:#6b7890;letter-spacing:0.072px;">30s ago</div>
<div class="b" style="left:1773.20px;top:1001.80px;width:10.80px;height:10.80px;background:#6ddb80;border-radius:5.4px;"></div>
<div class="t" style="left:1793.61px;top:998.00px;font-size:19.50px;color:#e2e8f0;letter-spacing:-0.405px;-webkit-text-stroke:0.2px #e2e8f0;">Coinbase</div>
<div class="t" style="left:2065.62px;top:1000.00px;font-size:16.75px;color:#6b7890;letter-spacing:0.030px;">45s ago</div>
<div class="b" style="left:1773.20px;top:1059.10px;width:10.80px;height:10.80px;background:#a98422;border-radius:5.4px;"></div>
<div class="t" style="left:1793.00px;top:1056.00px;font-size:19.50px;color:#e2e8f0;letter-spacing:-0.226px;-webkit-text-stroke:0.2px #e2e8f0;">Kraken</div>
<div class="t" style="left:2070.26px;top:1057.00px;font-size:16.75px;color:#6b7890;letter-spacing:-0.146px;">2m ago</div>
<div class="b" style="left:1773.20px;top:1116.40px;width:10.80px;height:10.80px;background:#6ddb80;border-radius:5.4px;"></div>
<div class="t" style="left:1793.62px;top:1113.00px;font-size:19.50px;color:#e2e8f0;letter-spacing:-0.337px;-webkit-text-stroke:0.2px #e2e8f0;">Gemini</div>
<div class="t" style="left:2071.32px;top:1115.00px;font-size:16.75px;color:#6b7890;letter-spacing:-0.359px;">1m ago</div>
<div class="b" style="left:31.70px;top:907.20px;width:1677.10px;height:300.00px;background:#090e1d;border:1.33px solid #141e2e;border-radius:16px;"></div>
<div class="t" style="left:63.50px;top:945.00px;font-size:21.75px;color:#f1f5f9;letter-spacing:-0.135px;-webkit-text-stroke:0.25px #f1f5f9;">Correlation Matrix</div>
<div class="t" style="left:414.30px;top:1006.00px;font-size:19.50px;color:#949fb5;letter-spacing:-1.020px;font-weight:700;">BTC</div>
<div class="b" style="left:305.70px;top:1048.80px;width:256.00px;height:46.80px;background:#e64544;border-radius:5.3px;"></div>
<div class="t" style="left:415.06px;top:1063.00px;font-size:19.50px;color:#ffffff;letter-spacing:-0.469px;-webkit-text-stroke:0.25px #ffffff;">1.00</div>
<div class="b" style="left:305.70px;top:1116.30px;width:256.00px;height:46.80px;background:#e64544;border-radius:5.3px;"></div>
<div class="t" style="left:690.55px;top:1006.00px;font-size:19.50px;color:#949fb5;letter-spacing:0.059px;font-weight:700;">ETH</div>
<div class="b" style="left:582.10px;top:1048.80px;width:256.00px;height:46.80px;background:#e64544;border-radius:5.3px;"></div>
<div class="t" style="left:690.84px;top:1063.00px;font-size:19.50px;color:#ffffff;letter-spacing:0.263px;-webkit-text-stroke:0.25px #ffffff;">0.82</div>
<div class="b" style="left:582.10px;top:1116.30px;width:256.00px;height:46.80px;background:#e64544;border-radius:5.3px;"></div>
<div class="t" style="left:967.84px;top:1006.00px;font-size:19.50px;color:#949fb5;letter-spacing:-1.366px;font-weight:700;">SOL</div>
<div class="b" style="left:858.50px;top:1048.80px;width:256.00px;height:46.80px;background:#f27716;border-radius:5.3px;"></div>
<div class="t" style="left:967.19px;top:1063.00px;font-size:19.50px;color:#ffffff;letter-spacing:0.160px;-webkit-text-stroke:0.25px #ffffff;">0.64</div>
<div class="b" style="left:858.50px;top:1116.30px;width:256.00px;height:46.80px;background:#f27716;border-radius:5.3px;"></div>
<div class="t" style="left:1238.01px;top:1006.00px;font-size:19.50px;color:#949fb5;letter-spacing:-0.613px;font-weight:700;">AVAX</div>
<div class="b" style="left:1134.90px;top:1048.80px;width:256.00px;height:46.80px;background:#e6b318;border-radius:5.3px;"></div>
<div class="t" style="left:1243.89px;top:1063.00px;font-size:19.50px;color:#ffffff;letter-spacing:0.052px;-webkit-text-stroke:0.25px #ffffff;">0.58</div>
<div class="b" style="left:1134.90px;top:1116.30px;width:256.00px;height:46.80px;background:#f27716;border-radius:5.3px;"></div>
<div class="t" style="left:1517.05px;top:1006.00px;font-size:19.50px;color:#949fb5;letter-spacing:-0.705px;font-weight:700;">LINK</div>
<div class="b" style="left:1411.30px;top:1048.80px;width:256.00px;height:46.80px;background:#f27716;border-radius:5.3px;"></div>
<div class="t" style="left:1522.49px;top:1063.00px;font-size:19.50px;color:#ffffff;letter-spacing:-1.380px;-webkit-text-stroke:0.25px #ffffff;">0.71</div>
<div class="b" style="left:1411.30px;top:1116.30px;width:256.00px;height:46.80px;background:#f27716;border-radius:5.3px;"></div>
<div class="t" style="left:73.20px;top:1063.00px;font-size:19.50px;color:#949fb5;letter-spacing:-1.079px;-webkit-text-stroke:0.2px #949fb5;">BTC</div>
<div class="b" style="left:2189.00px;top:0.00px;width:1.00px;height:1122.00px;background:#ffffff;"></div>
</div></body></html>
